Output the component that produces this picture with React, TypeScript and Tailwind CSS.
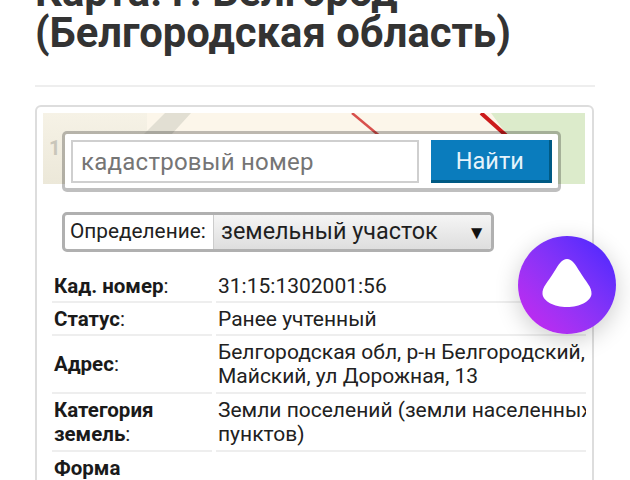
const ROWS = [
  { label: 'Кад. номер', value: ['31:15:1302001:56'], h: 'h-[33px]' },
  { label: 'Статус', value: ['Ранее учтенный'], h: 'h-[33px]' },
  { label: 'Адрес', value: ['Белгородская обл, р-н Белгородский,', 'Майский, ул Дорожная, 13'], h: 'h-[58px]' },
  { label: 'Категория земель', value: ['Земли поселений (земли населенных', 'пунктов)'], h: 'h-[58px]' },
  { label: 'Форма собственности', value: [], h: 'h-[58px]' },
];

function MapBackground() {
  return (
    <svg className="absolute inset-0 w-full h-full" viewBox="0 0 542 71" preserveAspectRatio="none">
      <defs>
        <linearGradient id="fade" x1="0" y1="0" x2="0" y2="1">
          <stop offset="0" stopColor="#f6f2e6" />
          <stop offset="1" stopColor="#ece8d9" />
        </linearGradient>
      </defs>
      <rect width="542" height="71" fill="#fcf6ea" />
      <rect width="104" height="71" fill="url(#fade)" />
      <path d="M122 0H148L128 22H100Z" fill="#e2dfd3" />
      <path d="M448 0H542V71H470V30Z" fill="#dcebcb" />
      <path d="M309 0L339 25" stroke="#d8504c" strokeWidth="2.5" />
      <path d="M438 0L466 25" stroke="#cc1b1b" strokeWidth="4" />
    </svg>
  );
}

export default function App() {
  return (
    <div className="relative h-[480px] w-[630px] overflow-hidden bg-white font-['Roboto',sans-serif] text-[#212121]">
      <div className="px-[35px]">
        <h1 className="-mt-[29px] text-[41.8px] leading-[41px] font-bold text-[#333333] whitespace-nowrap">
          Карта: г. Белгород
          <br />
          (Белгородская область)
        </h1>
        <div className="mt-[32px] h-[2px] w-[560px] bg-[#eeeeee]" />

        <div className="mt-[18px] w-[559px] h-[400px] rounded-[6px] border-2 border-[#dddddd] p-[6px]">
          <div className="relative h-[71px] w-[542px]">
            <MapBackground />
            <span className="absolute top-[20px] left-[6px] text-[20px] font-bold text-[#c9c6ba]">1</span>
            <div className="relative top-[18px] left-[19px] flex h-[61px] w-[499px] items-start rounded-[5px] border-[3px] border-b-[4px] border-black/25 bg-white bg-clip-padding p-[6px]">
              <div className="flex h-[43px] w-[349px] items-center border-2 border-[#cfcfcf] pl-[8px] text-[24px] tracking-[0.25px] text-[#757575]">
                кадастровый номер
              </div>
              <button className="ml-[12px] flex h-[43px] w-[122px] items-center justify-center border-r-[3px] border-b-[3px] border-[#005a84] bg-[#0a7cbd] pt-[3px] text-[23.5px] text-[#e6f3fb]">
                Найти
              </button>
            </div>
          </div>

          <div className="mt-[28px] ml-[19px] flex h-[40px] w-[432px] rounded-[5px] border-[3px] border-[#b0b0b0] bg-white">
            <div className="flex w-[148px] shrink-0 items-center pl-[5px] text-[20.8px] text-[#212121]">Определение:</div>
            <div className="flex flex-1 items-center justify-between rounded-r-[3px] border-l border-[#cccccc] bg-gradient-to-b from-[#f5f5f5] to-[#dedede] pr-[5px] pl-[7px] text-[23.4px] text-[#1f1f1f]">
              <span>земельный участок</span>
              <span className="text-[19px] leading-none text-[#111111]">▼</span>
            </div>
          </div>

          <div className="mt-[18px] ml-[9px] w-[534px] overflow-hidden">
            {ROWS.map(row => (
              <div key={row.label} className={`flex gap-[4px] ${row.h}`}>
                <div className="flex w-[160px] shrink-0 items-center border-b-2 border-[#eeeeee] px-[2px] text-[20.5px] leading-[24px]">
                  <span>
                    <b className="font-bold text-[#1a1a1a]">{row.label}</b>:
                  </span>
                </div>
                <div className="flex-1 min-w-0 flex items-center overflow-hidden border-b-2 border-[#eeeeee] pl-[2px] text-[21px] leading-[24px] whitespace-nowrap">
                  <div>
                    {row.value.map(line => (
                      <div key={line}>{line}</div>
                    ))}
                  </div>
                </div>
              </div>
            ))}
          </div>
        </div>
      </div>

      {/* Alice assistant button */}
      <div className="absolute top-[236px] left-[518px] flex h-[98px] w-[98px] items-center justify-center rounded-full bg-gradient-to-tr from-[#cc22ee] to-[#4422ff] shadow-[0_6px_24px_rgba(0,0,0,0.2)]">
        <svg className="mb-[4px]" width="50" height="50" viewBox="0 0 50 50">
          <path d="M25 1C30 1 33 6 38 14C44 24 50 29 49.500 36C49 43 38 49 25 49C12 49 1 43 .5 36C0 29 6 24 12 14C17 6 20 1 25 1Z" fill="#fff" />
        </svg>
      </div>
    </div>
  );
}
